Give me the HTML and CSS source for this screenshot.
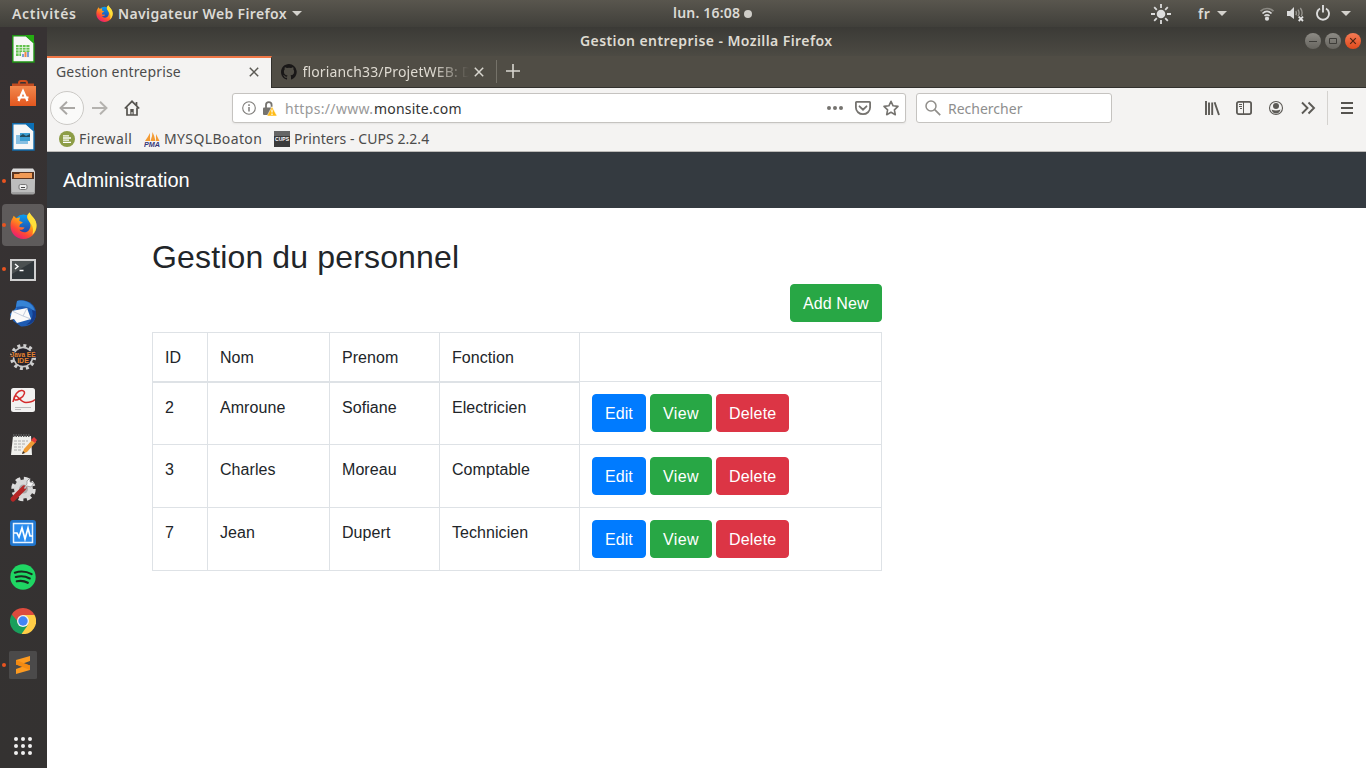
FILE: index.html
```html
<!DOCTYPE html>
<html lang="fr">
<head>
<meta charset="utf-8">
<title>Gestion entreprise</title>
<link rel="stylesheet" href="styles.css">
</head>
<body>
<svg width="0" height="0" class="defs">
  <defs>
    <linearGradient id="ffo" x1="0.8" y1="0" x2="0.2" y2="1"><stop offset="0" stop-color="#fff04a"/><stop offset=".4" stop-color="#ffa216"/><stop offset=".7" stop-color="#ff4a34"/><stop offset="1" stop-color="#e21384"/></linearGradient>
    <linearGradient id="ffb" x1="0" y1="0" x2="0" y2="1"><stop offset="0" stop-color="#0a9df0"/><stop offset="1" stop-color="#2b3c9e"/></linearGradient>
    <linearGradient id="bag" x1="0" y1="0" x2="0" y2="1"><stop offset="0" stop-color="#f3884d"/><stop offset="1" stop-color="#e2571f"/></linearGradient>
    <linearGradient id="grey" x1="0" y1="0" x2="0" y2="1"><stop offset="0" stop-color="#dedede"/><stop offset="1" stop-color="#9b9b9b"/></linearGradient>
    <linearGradient id="btn" x1="0" y1="0" x2="0" y2="1"><stop offset="0" stop-color="#8d8b85"/><stop offset="1" stop-color="#66645e"/></linearGradient>
    <linearGradient id="close" x1="0" y1="0" x2="0" y2="1"><stop offset="0" stop-color="#f57b55"/><stop offset="1" stop-color="#e04a1c"/></linearGradient>
    <symbol id="firefox" viewBox="0 0 26 26">
      <circle cx="13" cy="12" r="9.500" fill="url(#ffb)"/>
      <path d="M3.500 3.500L6 6l3.500-1L9 8.500l3.500 1.500-3 2-.5 2.500 5 .5c-1 2-3 2.500-5 2 2 3 7 3.500 9.500 0 2-3 1.500-6-.5-8.500-2-2.500-2.500-5.500 1-8 .5 3 6.500 6 6.500 13C25.500 20.500 20 26 13 26S.5 20.500.5 13c0-3.500 1-6 2.500-8z" fill="url(#ffo)"/>
      <path d="M19 .5c.5 3 6.500 6 6.500 12 0 4-1.500 7-4 9.500 1.500-5 .5-8-1.500-11-2.500-3-4-6.500-1-10.500z" fill="#ffe03a"/>
    </symbol>
  </defs>
</svg>
<header class="topbar">
  <span class="t-act">Activités</span>
  <svg class="t-ff" width="17" height="17"><use href="#firefox"/></svg>
  <span class="t-app">Navigateur Web Firefox</span>
  <i class="caret"></i>
  <span class="t-clock">lun. 16:08</span>
  <i class="dot"></i>
  <svg class="t-sun" width="20" height="20" viewBox="0 0 20 20"><circle cx="10" cy="10" r="4.300" fill="#dcdcdc"/><path d="M10 0v4M10 16v4M0 10h4M16 10h4M3.200 3.200l2.600 2.600M14.200 14.200l2.600 2.600M3.200 16.800l2.600-2.600M14.200 5.800l2.600-2.600" stroke="#dcdcdc" stroke-width="1.800"/></svg>
  <span class="t-lang">fr</span>
  <i class="caret"></i>
  <svg class="t-wifi" width="14" height="14" viewBox="0 0 14 14" fill="none" stroke-width="1.700"><path d="M.6 4.200C4 .6 10 .6 13.400 4.200" stroke="#8b8983"/><path d="M2.500 6.500c2.800-2.700 6.200-2.700 9 0M4.500 8.800c1.600-1.300 3.400-1.300 5 0" stroke="#dcdcdc"/><circle cx="7" cy="11.700" r="2.100" fill="#dcdcdc"/></svg>
  <svg class="t-vol" width="17" height="16" viewBox="0 0 17 16" fill="none"><path d="M0 5h3l4-4v12L3 10H0z" fill="#dcdcdc"/><path d="M8.800 5.200q1.200 2 0 4M11 3.600q2.200 3.400 0 6.600M13.300 2q3 4 1 8" stroke="#96948e" stroke-width="1.400"/><path d="M11.700 10.700l4.300 4.300M16 10.700L11.700 15" stroke="#e4e4e4" stroke-width="1.800"/></svg>
  <svg class="t-pow" width="14" height="16" viewBox="0 0 14 16" fill="none" stroke="#dcdcdc" stroke-width="1.900"><path d="M4 3.500A6 6 0 1 0 10 3.500M7 0v7.500"/></svg>
  <i class="caret"></i>
</header>
<div class="desktop">
  <aside class="dock">
    <div class="slot"><svg width="26" height="30" viewBox="0 0 26 30"><path d="M2.800 1.800H16L24 9v19H2.800z" fill="#f7f7f7" stroke="#1f9415" stroke-width="1.400"/><path d="M15 1h9v8z" fill="#25ac12"/><path d="M6 11h13.500v11H6z" fill="#64c14f"/><path d="M6 13.500h14M6 16h14M6 19h14M9 11v11M12.500 11v11M16 11v11" stroke="#e9f8e6" stroke-width=".8"/><path d="M11 18h9v6h-9z" fill="#f4f2ef"/><path d="M12 23v-3h2v3zM17 23v-5h2v5z" fill="#7b9fda"/><path d="M14.500 23v-5h2v5z" fill="#ee8a48"/></svg></div>
    <div class="slot"><svg width="26" height="28" viewBox="0 0 26 28"><path d="M9 7V4q0-2 2-2h4q2 0 2 2v3" fill="none" stroke="#cf4d1c" stroke-width="2"/><path d="M2 4.500h22V8H2z" fill="#c14d22"/><path d="M0 7h26v20H0z" fill="url(#bag)"/><path d="M8.500 22L13 12l4.500 10M7.500 18.500h11" fill="none" stroke="#fff" stroke-width="2.200"/></svg></div>
    <div class="slot"><svg width="26" height="30" viewBox="0 0 26 30"><path d="M2.800 1.800H16L24 9v19H2.800z" fill="#f7f7f7" stroke="#126cac" stroke-width="1.400"/><path d="M15 1h9v8z" fill="#0b70b6"/><path d="M6 13h12v9H6z" fill="#87c0e3"/><path d="M10 11h10v8H10z" fill="#3e9fd2"/><path d="M10 14l3-2 3 2 4-2v3H10z" fill="#234b5c"/></svg></div>
    <div class="slot run"><svg width="26" height="28" viewBox="0 0 26 28"><path d="M3 1.500h20l2 3v21q0 2-2 2H3q-2 0-2-2v-21z" fill="url(#grey)"/><path d="M2 5h22v7H2z" fill="#5a3520"/><path d="M4 7h5l1-1h12v5H4z" fill="#f09a55"/><path d="M2 12h22v13H2z" fill="#bdbdbd"/><rect x="9" y="17.500" width="8" height="5" rx="1.500" fill="#eee" stroke="#777"/><path d="M11 20.500h4" stroke="#444"/></svg></div>
    <div class="slot run active"><svg width="27" height="27"><use href="#firefox"/></svg></div>
    <div class="slot run"><svg class="down" width="26" height="22" viewBox="0 0 26 22"><rect x="1" y="1" width="24" height="20" fill="#30363a" stroke="#d0d0d0" stroke-width="2"/><path d="M2 2h22L2 15z" fill="#4b5051"/><path d="M5 5l3 2.500L5 10M9.500 11.500h4" fill="none" stroke="#fff" stroke-width="1.400"/></svg></div>
    <div class="slot"><svg width="28" height="28" viewBox="0 0 28 28"><path d="M8 2C16-1 27 4 27 14S20 28 12 27.500L4 22z" fill="#1d5bb2"/><path d="M8 2c10-2 17 4 18 11-5-5-10-7-19-5z" fill="#3684d6"/><path d="M8 8L1 15l1 4 5-2z" fill="#2b78cf"/><path d="M3 12l15-3 4 11-14 4-3-4-4 1z" fill="#fafafa"/><path d="M3 12l11 5 4-8M14 17l8 3" fill="none" stroke="#c2ccdc"/><path d="M23 11q3 9-6 15 11-2 10-14z" fill="#143b8b"/></svg></div>
    <div class="slot"><svg width="28" height="28" viewBox="0 0 28 28"><circle cx="14" cy="14" r="11.300" fill="none" stroke="#cfcfcf" stroke-width="3.600" stroke-dasharray="2.900 3.017"/><circle cx="14" cy="14" r="9.600" fill="#25222b" stroke="#c9c9c9" stroke-width="1.600"/><text x="14" y="13.500" class="ide ee">Java EE</text><text x="14" y="20" class="ide">IDE</text></svg></div>
    <div class="slot up"><svg width="24" height="24" viewBox="0 0 24 24"><rect width="24" height="24" rx="2.500" fill="#f2f2f1"/><path d="M2 14C3 7 7 2 11 2.500s3 5-2 8-7 1-5-2 5 6 11 6 8-2 9-3" fill="none" stroke="#d42c2c" stroke-width="1.500"/><path d="M4 19.500h11M4 21.500h6M15 19.500h5" stroke="#bbb"/></svg></div>
    <div class="slot"><svg width="28" height="24" viewBox="0 0 28 24"><path d="M4 3h18l1 19H2z" fill="#f0f0ed"/><path d="M4 2.500h17" stroke="#555" stroke-width="3" stroke-dasharray="1.500 1"/><path d="M5 8h14M5 11h12M5 14h9M5 17h7" stroke="#aaa" stroke-dasharray="3 1"/><path d="M13 21l2-5L24 6l3 3-9 10z" fill="#ee9b35"/><path d="M22 7l3-3 3 3-2 3z" fill="#e03b3b"/><path d="M13 21l1-3 2 2z" fill="#333"/></svg></div>
    <div class="slot"><svg width="28" height="28" viewBox="0 0 28 28"><circle cx="14.500" cy="14" r="10.500" fill="none" stroke="#dedede" stroke-width="3.500" stroke-dasharray="4.800 3.450"/><circle cx="14.500" cy="14" r="9.500" fill="#d8d8d8"/><circle cx="14.500" cy="14" r="4.500" fill="#aaa"/><path d="M4 24L15 13" stroke="#b52626" stroke-width="5" stroke-linecap="round"/><path d="M15 13l3-4V6l3-3v4l4 1-3 4-4-1-2 3z" fill="#f4f4f4" stroke="#8b8b8b" stroke-width=".7"/></svg></div>
    <div class="slot"><svg width="26" height="26" viewBox="0 0 26 26"><rect width="26" height="26" rx="3" fill="#1f75cd"/><rect x="3.500" y="3.500" width="19" height="19" fill="#2b8df0" stroke="#e6f2ff" stroke-width="1.500"/><path d="M4 13h3l2 4 3-9 3 11 3-11 2 8h3" fill="none" stroke="#fff" stroke-width="1.700"/></svg></div>
    <div class="slot"><svg width="26" height="26" viewBox="0 0 27 27"><circle cx="13.500" cy="13.500" r="13.200" fill="#1fd663"/><path d="M5 9q9-3 17.500 1.500M6 13.500q8-2 14.500 1.500M7 18q6-1.500 11.500 1.500" fill="none" stroke="#1b2a20" stroke-width="2.200" stroke-linecap="round"/></svg></div>
    <div class="slot"><svg width="26" height="26" viewBox="0 0 26 26"><path d="M13 13L1.740 6.500A13 13 0 0 1 24.260 6.500z" fill="#dd4b3e"/><path d="M13 13L24.260 6.500A13 13 0 0 1 11.500 26z" fill="#ffcd46"/><path d="M13 13l4.500 4.500L11.500 26A13 13 0 0 1 1.740 6.500z" fill="#199f5c"/><path d="M13 7h11.500l-5.500 7z" fill="#ffcd46"/><path d="M1.740 6.500L13 7l-5 7z" fill="#dd4b3e"/><path d="M1.740 6.500L8 16l4 3z" fill="#199f5c"/><circle cx="13" cy="13" r="6" fill="#f2f2f2"/><circle cx="13" cy="13" r="4.700" fill="#4285f4"/></svg></div>
    <div class="slot run"><svg width="28" height="28" viewBox="0 0 28 28"><rect width="28" height="28" rx="1.500" fill="#4b4a4a"/><path d="M7 9l14-4v5l-7 2.500 7 2v4.500L7 23v-5l7-2.500-7-2z" fill="#fc9a20"/><path d="M7 9l14 5.500V19L7 13.500z" fill="#f38a12"/></svg></div>
    <div class="apps"><i></i><i></i><i></i><i></i><i></i><i></i><i></i><i></i><i></i></div>
  </aside>
  <main class="window">
    <div class="titlebar">
      <span class="title">Gestion entreprise - Mozilla Firefox</span>
      <div class="winbtns">
        <svg width="16" height="16" viewBox="0 0 16 16"><circle cx="8" cy="8" r="8" fill="url(#btn)"/><path d="M4 8.500h8" stroke="#3e3d39"/></svg>
        <svg width="16" height="16" viewBox="0 0 16 16"><circle cx="8" cy="8" r="8" fill="url(#btn)"/><path d="M4.500 5.500h7v5h-7z" fill="none" stroke="#3e3d39"/></svg>
        <svg width="16" height="16" viewBox="0 0 16 16"><circle cx="8" cy="8" r="8" fill="url(#close)"/><path d="M5.200 5.200l5.600 5.600M10.800 5.200l-5.600 5.600" stroke="#4e2413" stroke-width="1.200"/></svg>
      </div>
    </div>
    <div class="tabs">
      <div class="tab on"><span class="tabtxt1">Gestion entreprise</span><svg width="10" height="10" viewBox="0 0 10 10"><path d="M.8.800l8.400 8.400M9.200.800L.8 9.200" stroke="#5b5954" stroke-width="1.500"/></svg></div>
      <div class="tab off">
        <svg width="16" height="16" viewBox="0 0 16 16"><path fill="#191717" d="M8 0C3.580 0 0 3.580 0 8c0 3.540 2.290 6.530 5.470 7.590.4.070.55-.17.55-.38v-1.490c-2.230.48-2.700-1.070-2.700-1.070-.36-.92-.89-1.170-.89-1.170-.73-.5.050-.49.050-.49.800.06 1.230.83 1.230.83.720 1.220 1.880.87 2.340.66.070-.52.280-.87.510-1.070-1.780-.2-3.640-.89-3.640-3.950 0-.87.310-1.590.82-2.150-.08-.2-.36-1.020.08-2.120 0 0 .67-.21 2.200.82a7.700 7.700 0 0 1 4 0c1.530-1.040 2.200-.82 2.200-.82.440 1.100.160 1.920.08 2.120.51.560.82 1.270.82 2.150 0 3.070-1.870 3.750-3.650 3.950.29.250.54.730.54 1.480v2.200c0 .210.150.460.550.380A8 8 0 0 0 8 0z"/></svg>
        <span class="tabtxt2">florianch33/ProjetWEB: D</span>
        <svg width="10" height="10" viewBox="0 0 10 10"><path d="M.8.800l8.400 8.400M9.200.800L.8 9.200" stroke="#d8d6cf" stroke-width="1.500"/></svg>
      </div>
      <svg class="plus" width="14" height="14" viewBox="0 0 14 14"><path d="M7 0v14M0 7h14" stroke="#d8d6cf" stroke-width="1.600"/></svg>
    </div>
    <div class="nav">
      <div class="back"><svg width="16" height="14" viewBox="0 0 16 14"><path d="M16 7H1.500M8 .700L1.500 7 8 13.300" fill="none" stroke="#aaa8a5" stroke-width="1.900"/></svg></div>
      <svg class="fwd" width="16" height="14" viewBox="0 0 16 14"><path d="M0 7h14.500M8 .700L14.500 7 8 13.300" fill="none" stroke="#b4b2af" stroke-width="1.900"/></svg>
      <svg class="home" width="16" height="16" viewBox="0 0 16 16"><path d="M.8 8.500L8 1.300l7.200 7.200M3 7.500V15h10V7.500M12.500 2v3.500" fill="none" stroke="#55534f" stroke-width="1.700"/><path d="M6.300 15V9h3.400v6h-1.200v-3h-1v3z" fill="#55534f"/></svg>
      <div class="url">
        <svg width="14" height="14" viewBox="0 0 14 14"><circle cx="7" cy="7" r="6.300" fill="none" stroke="#7e7c79" stroke-width="1.100"/><path d="M7 6v4.500M7 3.300V5" stroke="#7e7c79" stroke-width="1.500"/></svg>
        <svg class="lock" width="15" height="15" viewBox="0 0 15 15"><path d="M4 7V4a2.800 2.800 0 0 1 5.600 0v2" fill="none" stroke="#75736f" stroke-width="1.800"/><rect x="1" y="6.500" width="9" height="7.500" rx="1" fill="#75736f"/><path d="M10 5.500L15 15H5z" fill="#ffbb14" stroke="#fff" stroke-width=".5"/><path d="M10 8.500v3M10 12.500V14" stroke="#fff" stroke-width="1.200"/></svg>
        <span class="u1">https://www.</span><span class="u2">monsite.com</span>
        <svg class="urlend" width="74" height="16" viewBox="0 0 74 16" fill="none" stroke="#75736f"><g fill="#75736f" stroke="none"><circle cx="3" cy="8" r="2"/><circle cx="9" cy="8" r="2"/><circle cx="15" cy="8" r="2"/></g><path d="M30.500 1.900h13q.6 0 .6.600v5a7.100 6.700 0 0 1-14.200 0v-5q0-.6.600-.6z" stroke-width="1.800"/><path d="M33.500 6.300L37 9.700l3.500-3.400" stroke-width="1.800" stroke-linecap="round"/><path d="M65 1.300l2.100 4.500 4.900.600-3.600 3.400.9 4.900-4.300-2.400-4.300 2.400.9-4.900L58 6.400l4.900-.600z" stroke-width="1.600" stroke-linejoin="round"/></svg>
      </div>
      <div class="search"><svg width="16" height="16" viewBox="0 0 16 16"><circle cx="6" cy="6" r="5" fill="none" stroke="#908e8a" stroke-width="1.500"/><path d="M9.700 9.700l5.500 5.500" stroke="#908e8a" stroke-width="1.700"/></svg><span class="s1">Rechercher</span></div>
      <div class="tools">
        <svg width="16" height="16" viewBox="0 0 16 16"><path d="M2 1v14M5 2.500V15M8.200 2.500V15M10.600 2.200L15 15" stroke="#5c5a56" stroke-width="1.900"/></svg>
        <svg width="16" height="16" viewBox="0 0 16 16" fill="none" stroke="#5c5a56"><rect x=".9" y="1.900" width="14.200" height="12.200" rx="1.800" stroke-width="1.800"/><path d="M7.500 2v12M3 4.500h3M3 6.500h3M4 8.500h2"/></svg>
        <svg width="16" height="16" viewBox="0 0 16 16"><circle cx="8" cy="8" r="6.500" fill="none" stroke="#5c5a56" stroke-width="1.100"/><circle cx="8" cy="6" r="3" fill="#5c5a56"/><path d="M3.500 9.500q4.500 2 9 0-1 4-4.500 4t-4.500-4z" fill="#5c5a56"/></svg>
        <svg width="16" height="16" viewBox="0 0 16 16"><path d="M2 2.500L7.500 8 2 13.500M8.500 2.500L14 8l-5.500 5.500" fill="none" stroke="#5c5a56" stroke-width="1.900"/></svg>
      </div>
      <div class="menu"><svg width="12" height="12" viewBox="0 0 12 12"><path d="M0 1h12M0 6h12M0 11h12" stroke="#55534f" stroke-width="1.800"/></svg></div>
    </div>
    <div class="bookmarks">
      <svg width="16" height="16" viewBox="0 0 16 16"><circle cx="8" cy="8" r="8" fill="#8d9d47"/><path d="M4 4.800h6M4 7h8M4 9.200h6M4 11.400h8" stroke="#fff" stroke-width="1.300"/></svg><span class="b1">Firewall</span>
      <svg width="16" height="16" viewBox="0 0 16 16"><path d="M1 10q3-4 5-8v8zM6.500 10q2-5 2-9 2 4 3 9zM12 10V3q2 4 3.500 7z" fill="#f39b34"/><text x="0" y="15.500" class="pma" textLength="16" lengthAdjust="spacingAndGlyphs">PMA</text></svg><span class="b2">MYSQLBoaton</span>
      <svg width="16" height="16" viewBox="0 0 16 16"><path d="M0 0h16v16H0z" fill="#3b3b3b"/><path d="M0 0h16v5H0z" fill="#666"/><text x="1" y="10" class="cups" textLength="14" lengthAdjust="spacingAndGlyphs">CUPS</text></svg><span class="b3">Printers - CUPS 2.2.4</span>
    </div>
    <section class="page">
      <nav class="navbar">Administration</nav>
      <div class="container">
        <h2>Gestion du personnel</h2>
        <div class="add"><a class="btn green new">Add New</a></div>
        <table>
          <colgroup><col class="c1"><col class="c2"><col class="c3"><col class="c4"><col class="c5"></colgroup>
          <thead><tr><th>ID</th><th>Nom</th><th>Prenom</th><th>Fonction</th><td></td></tr></thead>
          <tbody>
            <tr><td>2</td><td>Amroune</td><td>Sofiane</td><td>Electricien</td><td><div class="acts"><a class="btn blue">Edit</a><a class="btn green">View</a><a class="btn red">Delete</a></div></td></tr>
            <tr><td>3</td><td>Charles</td><td>Moreau</td><td>Comptable</td><td><div class="acts"><a class="btn blue">Edit</a><a class="btn green">View</a><a class="btn red">Delete</a></div></td></tr>
            <tr><td>7</td><td>Jean</td><td>Dupert</td><td>Technicien</td><td><div class="acts"><a class="btn blue">Edit</a><a class="btn green">View</a><a class="btn red">Delete</a></div></td></tr>
          </tbody>
        </table>
      </div>
    </section>
  </main>
</div>
</body>
</html>
```
FILE: styles.css
```css
* { box-sizing: border-box; }
body { margin: 0; width: 1366px; height: 768px; overflow: hidden; background: #fff; font: 14px/20px "Noto Sans", "Open Sans", sans-serif; }
svg { display: block; flex: none; }
span { white-space: nowrap; flex: none; }
.defs { position: absolute; }

.topbar { height: 27px; display: flex; align-items: center; background: linear-gradient(#59564e, #403f3a); color: #dcdad5; font-weight: 600; padding-left: 12px; }
.t-act { width: 84px; letter-spacing: .68px; }
.t-ff { margin-right: 5px; }
.t-app { width: 174px; letter-spacing: .37px; }
.caret { flex: none; border: 5px solid transparent; border-top-color: #d4d2cd; border-bottom: 0; }
.t-clock { width: 71px; margin-left: 371px; letter-spacing: .2px; padding-bottom: 1px; }
.dot { flex: none; width: 8px; height: 8px; border-radius: 50%; background: #cfcdc8; }
.t-sun { margin-left: 399px; }
.t-lang { width: 19px; margin-left: 27px; letter-spacing: .5px; }
.t-wifi { margin-left: 33px; }
.t-vol { margin-left: 13px; margin-top: 1px; }
.t-pow { margin-left: 12px; margin-top: -2px; }
.t-pow + .caret { margin-left: 11px; }

.desktop { display: flex; height: 741px; }
.dock { width: 47px; flex: none; background: linear-gradient(#373233, #343231); display: flex; flex-direction: column; }
.slot { width: 47px; height: 44px; padding-right: 1px; display: flex; align-items: center; justify-content: center; flex: none; position: relative; }
.run::before { content: ""; position: absolute; left: 2px; top: 20px; width: 4px; height: 4px; border-radius: 50%; background: #e95420; }
.active::after { content: ""; position: absolute; left: 2px; top: 1px; width: 42px; height: 42px; border-radius: 4px; background: rgba(255,255,255,.2); }
.active svg { position: relative; z-index: 1; }
.active::before { z-index: 1; }
.down { margin-top: 2px; }
.up { padding-bottom: 2px; }
.ide { font: bold 7px "Liberation Sans", sans-serif; fill: #e58431; text-anchor: middle; stroke: #25222b; stroke-width: 1.500px; paint-order: stroke; }
.ee { font-size: 6.500px; }
.apps { display: grid; grid-template-columns: repeat(3, 4px); gap: 3px; margin: auto 0 13px 14px; }
.apps i { width: 4px; height: 4px; border-radius: 50%; background: #f0f0f0; }

.window { flex: 1; display: flex; flex-direction: column; min-width: 0; }
.titlebar { height: 29px; flex: none; display: flex; align-items: center; background: linear-gradient(#3b3a36, #4c4a43); color: #dfdbd2; font-weight: 600; padding: 0 5px 0 533px; }
.title { width: 254px; letter-spacing: .42px; padding-bottom: 1px; }
.winbtns { display: flex; gap: 4px; margin: -2px 0 0 auto; }
.tabs { height: 32px; flex: none; display: flex; background: #504d45; border-bottom: 1px solid #32312d; }
.tab { display: flex; align-items: center; justify-content: space-between; }
.on { width: 225px; height: 32px; background: #f4f3f2; border-top: 2px solid #f07746; border-right: 1px solid #32312d; padding: 0 12px 0 9px; color: #4c4c4c; }
.on svg { margin-top: -2px; }
.tabtxt1 { letter-spacing: .17px; padding-bottom: 2px; }
.off { width: 225px; padding: 0 12px 0 9px; border-right: 1px solid #757269; margin: 4px 0; color: #dfdbd2; }
.tabtxt2 { width: 166px; overflow: hidden; letter-spacing: .15px; -webkit-mask-image: linear-gradient(90deg, #000 130px, transparent 166px); mask-image: linear-gradient(90deg, #000 130px, transparent 166px); }
.plus { margin: 8px 0 0 9px; }
.nav { height: 40px; flex: none; background: #f4f3f2; display: flex; align-items: center; padding-left: 3px; }
.back { width: 34px; height: 34px; border: 1px solid #cbc9c6; border-radius: 50%; background: #fafaf9; display: flex; align-items: center; justify-content: center; }
.fwd { margin-left: 8px; }
.home { margin-left: 16px; }
.url { width: 674px; height: 30px; margin-left: 92px; background: #fff; border: 1px solid #c5c3c0; border-radius: 3px; display: flex; align-items: center; padding: 0 5px 0 9px; box-shadow: 0 1px 2px rgba(0,0,0,.06); }
.lock { margin: 0 8px 0 6px; }
.u1 { color: #999; width: 89px; letter-spacing: .33px; padding-top: 2px; }
.u2 { color: #333; letter-spacing: .2px; padding-top: 2px; }
.urlend { margin-left: auto; }
.search { width: 196px; height: 30px; margin-left: 10px; background: #fff; border: 1px solid #c5c3c0; border-radius: 3px; display: flex; align-items: center; gap: 7px; padding-left: 8px; color: #8e8e8e; }
.s1 { padding-top: 2px; }
.tools { display: flex; gap: 16px; margin-left: 92px; }
.menu { margin-left: 11px; height: 34px; border-left: 1px solid #d4d2cf; display: flex; align-items: center; padding-left: 13px; }
.bookmarks { height: 24px; flex: none; background: #f4f3f2; border-bottom: 1px solid #bcbab8; display: flex; align-items: center; padding: 0 0 1px 12px; color: #4c4c4c; }
.bookmarks span { margin-left: 4px; }
.b1 { width: 65px; letter-spacing: .38px; }
.b2 { width: 110px; letter-spacing: .36px; }
.b3 { letter-spacing: .05px; }
.pma { font: italic bold 7px "Liberation Sans", sans-serif; fill: #373778; }
.cups { font: bold 5.200px "Liberation Sans", sans-serif; fill: #fff; }

.page { flex: 1; background: #fff; color: #212529; font: 16px/24px "Liberation Sans", Arial, sans-serif; }
.navbar { height: 56px; background: #343a40; color: #fff; font-size: 20px; line-height: 56px; padding-left: 16px; }
.container { width: 730px; margin: 30px 0 0 105px; }
h2 { font-size: 32px; line-height: 38px; font-weight: 400; letter-spacing: .15px; margin: 0 0 8px; }
.add { display: flex; justify-content: flex-end; margin-bottom: 10px; }
.btn { display: block; height: 38px; padding: 7px 12px 5px; border: 1px solid; border-radius: 4px; color: #fff; white-space: nowrap; }
.acts { display: flex; gap: 4px; }
.green { background: #28a745; border-color: #28a745; width: 62px; letter-spacing: .4px; }
.blue { background: #007bff; border-color: #007bff; width: 54px; }
.red { background: #dc3545; border-color: #dc3545; width: 73px; letter-spacing: .2px; }
.new { width: 92px; letter-spacing: .1px; }
table { border-collapse: collapse; table-layout: fixed; width: 730px; border: 1px solid #dee2e6; }
th, td { border: 1px solid #dee2e6; padding: 13px 12px 11px; text-align: left; vertical-align: top; font-weight: 400; letter-spacing: .06px; }
td:last-child { padding: 12px; }
tbody tr:first-child td:not(:last-child) { padding-top: 14px; box-shadow: inset 0 1px #dee2e6; }
.c1 { width: 55px; } .c2 { width: 122px; } .c3 { width: 110px; } .c4 { width: 140px; } .c5 { width: 302px; }
```
